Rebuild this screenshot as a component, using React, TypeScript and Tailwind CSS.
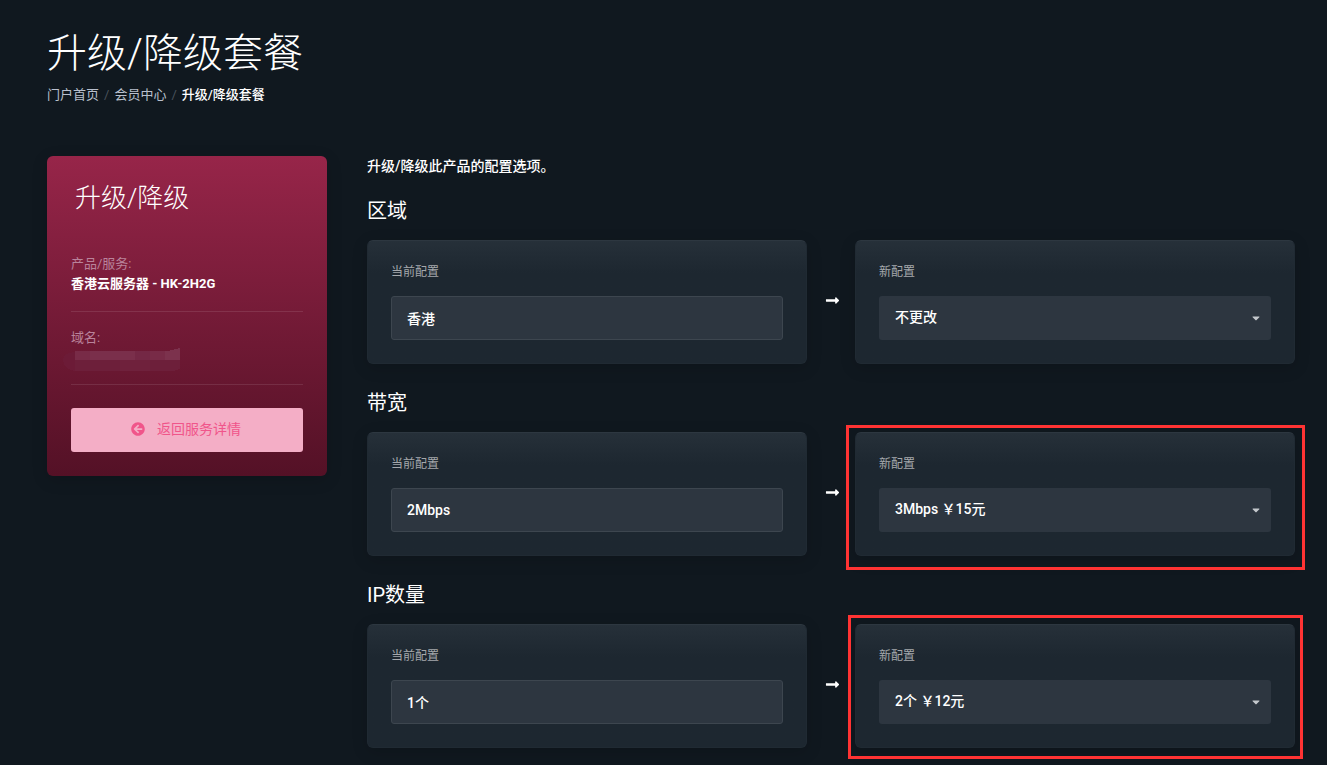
import { useState } from 'react';
import clsx from 'clsx';
import { FaArrowCircleLeft, FaCaretDown, FaLongArrowAltRight } from 'react-icons/fa';

type Option = {
    id: string;
    title: string;
    current: string;
    choices: string[];
    selected: string;
    highlight?: string;
};

const options: Option[] = [
    {
        id: 'region',
        title: '区域',
        current: '香港',
        choices: ['不更改'],
        selected: '不更改',
    },
    {
        id: 'bandwidth',
        title: '带宽',
        current: '2Mbps',
        choices: ['不更改', '3Mbps ￥15元'],
        selected: '3Mbps ￥15元',
        highlight: '-top-[7px] -right-[10px] -bottom-[14px] -left-[9px]',
    },
    {
        id: 'ip',
        title: 'IP数量',
        current: '1个',
        choices: ['不更改', '2个 ￥12元'],
        selected: '2个 ￥12元',
        highlight: '-top-[9px] -right-[8px] -bottom-[11px] -left-[7px]',
    },
];

const cardClass =
    'relative flex-1 min-w-0 rounded-md border border-[#202a33] border-t-[#2d3740] bg-[#1d2730] bg-linear-to-b from-[#263039] to-[#1d2730] to-[32px] px-[23px] pt-[21px] pb-[23px] shadow-[0_4px_16px_rgba(0,0,0,0.15)]';

const labelClass = 'block text-xs leading-5 text-[#a5a8ac]';

function Breadcrumb() {
    return (
        <nav className="mt-[7px] flex gap-[5px] text-[13px] leading-5 text-[#b9c0ce]">
            <a href="#home">门户首页</a>
            <span className="text-[#4a525c]">/</span>
            <a href="#member">会员中心</a>
            <span className="text-[#4a525c]">/</span>
            <span className="font-medium text-white">升级/降级套餐</span>
        </nav>
    );
}

function MaskedDomain() {
    return (
        <svg width="120" height="24" viewBox="0 0 120 24" className="-ml-2 block" shapeRendering="crispEdges">
            <path d="M12 3H105L117 0V12H12Z" fill="#782b47" />
            <path d="M27 3H72V12H27Z" fill="#7a2f4b" />
            <path d="M72 3H87V12H72Z" fill="#742845" />
            <path d="M105 3L117 0V12H102V3Z" fill="#7c324d" />
            <path d="M12 12H117V21L110 23H12Z" fill="#6d1f3a" />
            <path d="M57 12H87V23H57Z" fill="#6f213c" />
            <path d="M12 4Q0 5 0 12Q1 21 12 23Z" fill="#6c1b37" />
        </svg>
    );
}

function Sidebar() {
    return (
        <aside className="w-[280px] shrink-0 rounded-md bg-linear-to-b from-[#972549] to-[#541126] px-6 pb-6 pt-[22px] shadow-[0_4px_16px_rgba(0,0,0,0.15)]">
            <h2 className="ml-1 text-[26px] font-light leading-10 text-white">升级/降级</h2>
            <dl className="mt-9 text-[13px] leading-5">
                <div className="border-b border-white/10 pb-[17px]">
                    <dt className="text-[#b9839b]">产品/服务:</dt>
                    <dd className="font-bold text-white">香港云服务器 - HK-2H2G</dd>
                </div>
                <div className="border-b border-white/10 pb-3 pt-4">
                    <dt className="text-[#b9839b]">域名:</dt>
                    <dd>
                        <MaskedDomain />
                    </dd>
                </div>
            </dl>
            <button
                type="button"
                className="mt-[23px] flex h-11 w-full items-center justify-center gap-3 rounded-[3px] bg-[#f4aec6] pb-0.5 pr-0.5 text-sm text-[#f0558a]"
            >
                <FaArrowCircleLeft size={14} />
                返回服务详情
            </button>
        </aside>
    );
}

function OptionRow({ option }: { option: Option }) {
    const [value, setValue] = useState(option.selected);

    return (
        <section className="mt-6 first-of-type:mt-5">
            <h3 className="text-xl leading-[30px] text-white">{option.title}</h3>
            <div className="mt-[14px] flex items-center">
                <div className={cardClass}>
                    <label htmlFor={`${option.id}-current`} className={labelClass}>
                        当前配置
                    </label>
                    <input
                        id={`${option.id}-current`}
                        readOnly
                        value={option.current}
                        className="mt-[14px] block h-11 w-full rounded-[3px] border border-[#3d464f] bg-[#2d3640] px-[15px] text-sm font-medium text-white outline-none"
                    />
                </div>
                <div className="flex w-12 shrink-0 justify-center pb-1 pl-0.5 text-white">
                    <FaLongArrowAltRight size={15} />
                </div>
                <div className={cardClass}>
                    <label htmlFor={`${option.id}-new`} className={labelClass}>
                        新配置
                    </label>
                    <div className="relative mt-[14px]">
                        <select
                            id={`${option.id}-new`}
                            value={value}
                            onChange={(e) => setValue(e.target.value)}
                            className="block h-11 w-full appearance-none rounded-[3px] bg-[#2d3640] px-4 pb-0.5 text-sm font-medium text-white outline-none"
                        >
                            {option.choices.map((choice) => (
                                <option key={choice}>{choice}</option>
                            ))}
                        </select>
                        <FaCaretDown
                            size={12}
                            className="pointer-events-none absolute right-[9px] top-4 text-[#c4c8cc]"
                        />
                    </div>
                    {option.highlight && (
                        <div
                            className={clsx(
                                'pointer-events-none absolute -m-px border-3 border-[#ff3333]',
                                option.highlight,
                            )}
                        />
                    )}
                </div>
            </div>
        </section>
    );
}

export default function App() {
    return (
        <div className="min-h-screen bg-[#10181f] pb-4 pl-[47px] pr-8 pt-[30px] font-[Roboto,'Noto_Sans_CJK_SC',sans-serif]">
            <header>
                <h1 className="text-[40px] font-light leading-[48px] text-white">升级/降级套餐</h1>
                <Breadcrumb />
            </header>
            <div className="mt-[51px] flex items-start gap-10">
                <Sidebar />
                <main className="min-w-0 flex-1">
                    <p className="text-sm font-medium leading-5 text-white">升级/降级此产品的配置选项。</p>
                    {options.map((option) => (
                        <OptionRow key={option.id} option={option} />
                    ))}
                </main>
            </div>
        </div>
    );
}
